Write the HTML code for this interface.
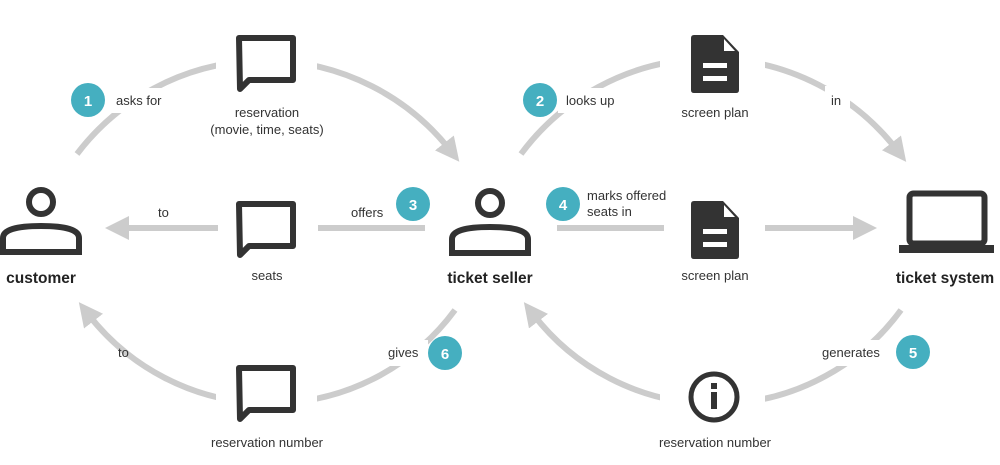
<!DOCTYPE html>
<html><head><meta charset="utf-8"><style>
html,body{margin:0;padding:0;background:#fff;width:1000px;height:465px;overflow:hidden}
svg{display:block}
text{font-family:"Liberation Sans",sans-serif;fill:#333;font-size:13px}
.b{font-weight:bold;font-size:15.5px;fill:#222}
.n{fill:#fff;font-weight:bold;font-size:15px}
</style></head><body>
<svg width="1000" height="465" viewBox="0 0 1000 465">
<defs>
<marker id="ah" markerWidth="4" markerHeight="4" refX="1.5" refY="2" orient="auto" markerUnits="strokeWidth">
<path d="M0,0 L4,2 L0,4 Z" fill="#ccc"/>
</marker>
</defs>
<g fill="none" stroke="#ccc" stroke-width="6">
<path d="M77,154 A236,236 0 0 1 450,150" marker-end="url(#ah)"/>
<path d="M521,154 A236,236 0 0 1 897,150" marker-end="url(#ah)"/>
<path d="M425,228 L318,228"/>
<path d="M218,228 L120,228" marker-end="url(#ah)"/>
<path d="M557,228 L664,228"/>
<path d="M765,228 L862,228" marker-end="url(#ah)"/>
<path d="M455,310 A230,230 0 0 1 88,314" marker-end="url(#ah)"/>
<path d="M901,310 A230,230 0 0 1 533,314" marker-end="url(#ah)"/>
</g>
<g fill="#fff">
<rect x="216" y="15" width="101" height="90"/>
<rect x="660" y="15" width="105" height="90"/>
<rect x="106" y="88" width="64" height="25"/>
<rect x="558" y="88" width="66" height="25"/>
<rect x="825" y="86" width="25" height="28"/>
<rect x="216" y="360" width="101" height="80"/>
<rect x="660" y="360" width="105" height="80"/>
<rect x="382" y="340" width="46" height="26"/>
<rect x="817" y="340" width="78" height="26"/>
</g>
<g fill="#45afc0">
<circle cx="88" cy="100" r="17"/><circle cx="540" cy="100" r="17"/>
<circle cx="413" cy="204" r="17"/><circle cx="563" cy="204" r="17"/>
<circle cx="913" cy="352" r="17"/><circle cx="445" cy="353" r="17"/>
</g>
<g text-anchor="middle">
<text class="n" x="88" y="106">1</text><text class="n" x="540" y="106">2</text>
<text class="n" x="413" y="210">3</text><text class="n" x="563" y="210">4</text>
<text class="n" x="913" y="358">5</text><text class="n" x="445" y="359">6</text>
</g>
<g fill="none" stroke="#333" stroke-width="6" stroke-linejoin="round">
<path d="M239,38 H293 V80 H249 L240,89 Z"/>
<path d="M239,204 H293 V246 H249 L240,255 Z"/>
<path d="M239,368 H293 V410 H249 L240,419 Z"/>
</g>
<g>
<path d="M694,35 H723 L739,52 V90 Q739,93 736,93 H694 Q691,93 691,90 V38 Q691,35 694,35 Z" fill="#333"/>
<path d="M724,39 L735,51 H724 Z" fill="#fff"/>
<rect x="703" y="63" width="24" height="5" fill="#fff"/><rect x="703" y="76" width="24" height="5" fill="#fff"/>
<path d="M694,201 H723 L739,218 V256 Q739,259 736,259 H694 Q691,259 691,256 V204 Q691,201 694,201 Z" fill="#333"/>
<path d="M724,205 L735,217 H724 Z" fill="#fff"/>
<rect x="703" y="229" width="24" height="5" fill="#fff"/><rect x="703" y="242" width="24" height="5" fill="#fff"/>
</g>
<g fill="none" stroke="#333" stroke-width="6">
<circle cx="41" cy="202" r="12"/>
<path d="M3,252 V238 Q3,226 41,226 Q79,226 79,238 V252 Z"/>
<circle cx="490" cy="203" r="12"/>
<path d="M452,253 V239 Q452,227 490,227 Q528,227 528,239 V253 Z"/>
</g>
<rect x="909.5" y="193.5" width="75" height="50" rx="4" fill="none" stroke="#333" stroke-width="6"/>
<rect x="899" y="245" width="95" height="8" fill="#333"/>
<circle cx="714" cy="397" r="23" fill="none" stroke="#333" stroke-width="5"/>
<rect x="711" y="383" width="6" height="6" fill="#333"/>
<rect x="711" y="392" width="6" height="17" fill="#333"/>
<text x="116" y="105">asks for</text>
<text x="566" y="105">looks up</text>
<text x="831" y="105">in</text>
<text x="351" y="217">offers</text>
<text x="158" y="217">to</text>
<text x="587" y="200">marks offered</text>
<text x="587" y="216">seats in</text>
<text x="118" y="357">to</text>
<text x="388" y="357">gives</text>
<text x="822" y="357">generates</text>
<g text-anchor="middle">
<text x="267" y="117">reservation</text>
<text x="267" y="134">(movie, time, seats)</text>
<text x="715" y="117">screen plan</text>
<text x="267" y="280">seats</text>
<text x="715" y="280">screen plan</text>
<text x="267" y="447">reservation number</text>
<text x="715" y="447">reservation number</text>
<text class="b" x="41" y="283">customer</text>
<text class="b" x="490" y="283">ticket seller</text>
<text class="b" x="945" y="283">ticket system</text>
</g>
</svg>
</body></html>
